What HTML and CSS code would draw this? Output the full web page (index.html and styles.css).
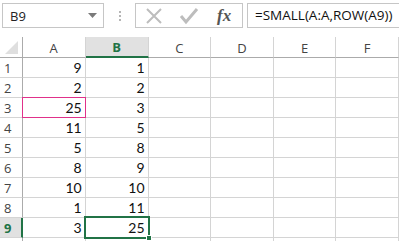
FILE: index.html
```html
<!DOCTYPE html>
<html lang="en">
<head>
    <meta charset="UTF-8">
    <title>SMALL formula</title>
    <link rel="stylesheet" href="styles.css">
</head>
<body>
    <div class="formula-row">
        <div class="name-box">
            <span>B9</span>
            <svg class="drop" width="9" height="5" viewBox="0 0 9 5"><path d="M0 0h9L4.5 5z" fill="#7a7a7a"/></svg>
        </div>
        <div class="grip"><i></i><i></i><i></i></div>
        <div class="func-box">
            <svg width="18" height="18" viewBox="0 0 18 18"><path d="M2 2L16 16M16 2L2 16" stroke="#bdbdbd" stroke-width="2" fill="none"/></svg>
            <svg width="20" height="18" viewBox="0 0 20 18"><path d="M2 9l5 6L18 2" stroke="#bdbdbd" stroke-width="3" fill="none"/></svg>
            <span class="fx">fx</span>
        </div>
        <div class="formula">=SMALL(A:A,ROW(A9))</div>
    </div>

    <div class="sheet-wrap">
        <table class="sheet">
            <tr class="head">
                <th class="corner"><span class="tri"></span></th>
                <th>A</th>
                <th class="sel">B</th>
                <th>C</th>
                <th>D</th>
                <th>E</th>
                <th>F</th>
            </tr>
            <tr><th>1</th><td>9</td><td>1</td><td></td><td></td><td></td><td></td></tr>
            <tr><th>2</th><td>2</td><td>2</td><td></td><td></td><td></td><td></td></tr>
            <tr><th>3</th><td class="ref">25<span class="ref-box"></span></td><td>3</td><td></td><td></td><td></td><td></td></tr>
            <tr><th>4</th><td>11</td><td>5</td><td></td><td></td><td></td><td></td></tr>
            <tr><th>5</th><td>5</td><td>8</td><td></td><td></td><td></td><td></td></tr>
            <tr><th>6</th><td>8</td><td>9</td><td></td><td></td><td></td><td></td></tr>
            <tr><th>7</th><td>10</td><td>10</td><td></td><td></td><td></td><td></td></tr>
            <tr><th>8</th><td>1</td><td>11</td><td></td><td></td><td></td><td></td></tr>
            <tr><th class="sel-row">9</th><td>3</td><td class="active">25<span class="active-box"><span class="handle"></span></span></td><td></td><td></td><td></td><td></td></tr>
            <tr><th></th><td></td><td></td><td></td><td></td><td></td><td></td></tr>
        </table>
    </div>
</body>
</html>
```

FILE: styles.css
```css
* {
    margin: 0;
    padding: 0;
    box-sizing: border-box;
}

html, body {
    width: 399px;
    height: 241px;
    overflow: hidden;
}

body {
    font-family: 'Open Sans', 'Liberation Sans', sans-serif;
    background: #fff;
    color: #000;
}

/* formula bar */
.formula-row {
    display: flex;
    align-items: center;
    height: 37px;
    padding: 3px 0 9px 2px;
}

.name-box {
    width: 102px;
    height: 25px;
    border: 1px solid #c6c6c6;
    display: flex;
    align-items: center;
    justify-content: space-between;
    padding: 0 6px 0 7px;
    font-size: 13px;
    color: #222;
}

.grip {
    width: 31px;
    display: flex;
    flex-direction: column;
    align-items: center;
    gap: 2px;
}

.grip i {
    width: 2px;
    height: 2px;
    background: #b5b5b5;
}

.func-box {
    width: 108px;
    height: 25px;
    border: 1px solid #c6c6c6;
    display: flex;
    align-items: center;
    gap: 16px;
    padding-left: 9px;
}

.fx {
    font-family: 'Liberation Serif', serif;
    font-style: italic;
    font-weight: bold;
    font-size: 17px;
    color: #555;
    margin-left: 2px;
}

.formula {
    flex: 1;
    height: 25px;
    margin-left: 4px;
    border: 1px solid #c6c6c6;
    border-right: none;
    padding-left: 7px;
    font-size: 13.5px;
    line-height: 22px;
    color: #111;
    white-space: nowrap;
}

/* grid */
.sheet-wrap {
    height: 204px;
    overflow: hidden;
}

.sheet {
    border-collapse: separate;
    border-spacing: 0;
    table-layout: fixed;
}

.sheet th,
.sheet td {
    width: 64px;
    height: 20px;
    border-right: 1px solid #d4d4d4;
    border-bottom: 1px solid #d4d4d4;
    font-weight: normal;
    position: relative;
}

.sheet th {
    font-size: 13px;
    color: #444;
}

.sheet td {
    font-family: 'Lato', 'Liberation Sans', sans-serif;
    font-size: 14px;
    text-align: right;
    padding-right: 3px;
    line-height: 18px;
    color: #111;
}

.sheet tr th:first-child {
    width: 23px;
    text-align: left;
    padding-left: 4px;
    border-right-color: #ababab;
}

.head th {
    height: 21px;
    border-bottom-color: #ababab;
    text-align: center;
    padding-top: 1px;
}

.head .corner {
    padding: 0;
}

.tri {
    position: absolute;
    right: 4px;
    bottom: 3px;
    width: 0;
    height: 0;
    border-left: 13px solid transparent;
    border-bottom: 13px solid #dfdfdf;
}

.head .sel {
    background: #e1e1e1;
    color: #217346;
    font-weight: bold;
    border-bottom: 2px solid #217346;
}

.sheet .sel-row {
    background: #e1e1e1;
    color: #217346;
    font-weight: bold;
    border-right: 2px solid #217346 !important;
}

/* overlays */
.ref {
    z-index: 1;
}

.ref-box {
    position: absolute;
    left: -1px;
    top: -1px;
    right: -1px;
    bottom: -1px;
    border: 1px solid #e0318a;
}

.active {
    z-index: 1;
}

.active-box {
    position: absolute;
    left: -2px;
    top: -2px;
    right: -2px;
    bottom: -2px;
    border: 2px solid #217346;
}

.handle {
    position: absolute;
    right: -4px;
    bottom: -4px;
    width: 6px;
    height: 6px;
    background: #217346;
    border: 1px solid #fff;
}
```
